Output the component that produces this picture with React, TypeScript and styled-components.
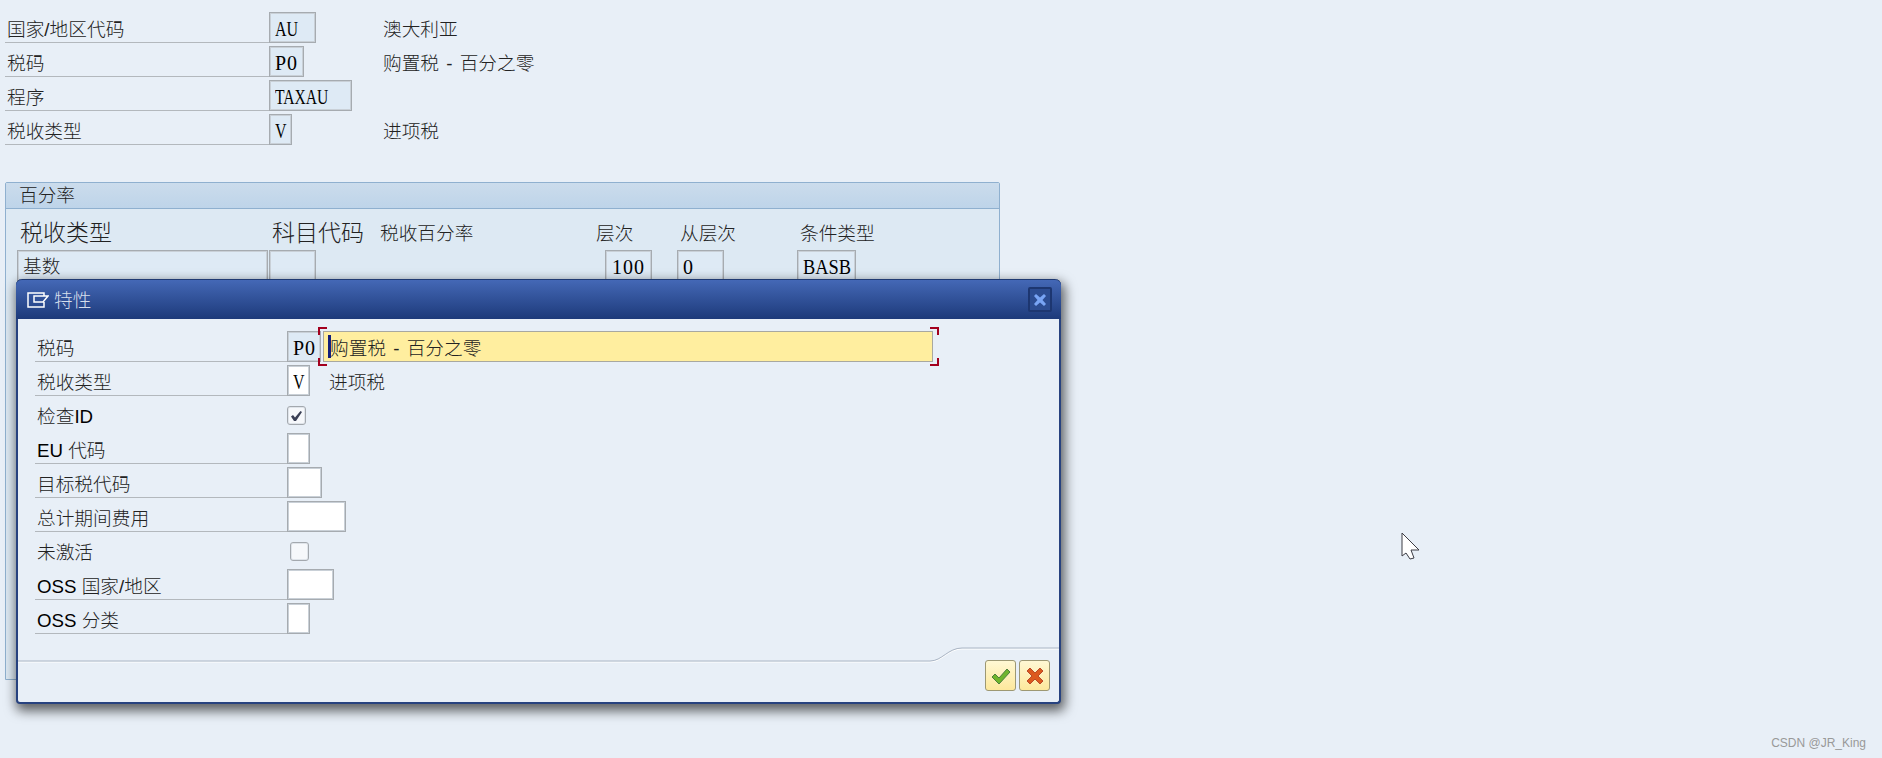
import React from 'react';
import styled, { createGlobalStyle } from 'styled-components';

const GlobalStyle = createGlobalStyle`
  html, body {
    margin: 0;
    padding: 0;
    background: #e8eff7;
    overflow: hidden;
  }
`;

const Page = styled.div`
  position: relative;
  box-sizing: border-box;
  width: 1882px;
  height: 758px;
  padding: 12px 0 0 5px;
  overflow: hidden;
  background: #e8eff7;
  color: #222;
  font-family: "Liberation Sans", "Noto Sans CJK SC", sans-serif;
  font-size: 18.7px;
  font-weight: 300;
`;

const Form = styled.div`
  display: flex;
  flex-direction: column;
  gap: 3px;
`;

const Row = styled.div<{ $label: number; $field: number }>`
  display: grid;
  grid-template-columns: ${({ $label }) => $label}px ${({ $field }) => $field}px 1fr;
  grid-template-rows: 31px;
  align-items: stretch;
`;

const Label = styled.div<{ $plain?: boolean }>`
  box-sizing: border-box;
  padding: 3px 0 0 2px;
  line-height: 29px;
  white-space: nowrap;
  border-bottom: 1px solid ${({ $plain }) => ($plain ? 'transparent' : '#b3b8bd')};
`;

const Latin = styled.span`
  color: #000;
  font-weight: 400;
`;

const Field = styled.div<{ $width: number; $tone?: 'blue' | 'white'; $right?: boolean; $cjk?: boolean }>`
  flex: none;
  box-sizing: border-box;
  width: ${({ $width }) => $width}px;
  height: 31px;
  padding: 0 ${({ $right }) => ($right ? '6px' : '4px')} 0 5px;
  border: 1px solid #a6abb0;
  box-shadow: inset 0 0 0 1px #c9d0d7;
  background: ${({ $tone }) => ($tone === 'white' ? '#fff' : '#deeaf5')};
  color: ${({ $cjk }) => ($cjk ? '#222' : '#000')};
  font-family: ${({ $cjk }) =>
    $cjk ? '"Liberation Sans", "Noto Sans CJK SC", sans-serif' : '"Liberation Serif", serif'};
  font-size: ${({ $cjk }) => ($cjk ? '18.7px' : '20px')};
  font-weight: ${({ $cjk }) => ($cjk ? 300 : 400)};
  line-height: ${({ $cjk }) => ($cjk ? '31px' : '33px')};
  text-align: ${({ $right }) => ($right ? 'right' : 'left')};
  white-space: nowrap;
  overflow: hidden;
`;

// the reference's field font is narrower than Liberation Serif
const FieldText = styled.span<{ $squeeze?: number; $spread?: boolean }>`
  display: inline-block;
  transform: scaleX(${({ $squeeze }) => $squeeze ?? 1});
  transform-origin: left center;
  letter-spacing: ${({ $spread }) => ($spread ? '1px' : '0')};
`;

const Description = styled.div`
  padding-top: 3px;
  line-height: 29px;
  white-space: nowrap;
  word-spacing: 2px;
`;

const Panel = styled.section`
  box-sizing: border-box;
  width: 995px;
  height: 498px;
  margin-top: 37px;
  border: 1px solid #8fb0cf;
  border-radius: 2px 2px 0 0;
  background: #dde9f3;
`;

const PanelHead = styled.div`
  box-sizing: border-box;
  height: 26px;
  padding-left: 13px;
  line-height: 26px;
  background: linear-gradient(#cbdcec, #bed4e9);
  border-bottom: 1px solid #8fb0cf;
`;

const ColumnRow = styled.div`
  display: grid;
  grid-template-columns: 252px 108px 216px 84px 120px 1fr;
  align-items: center;
  box-sizing: border-box;
  height: 41px;
  padding: 3px 0 0 14px;
  white-space: nowrap;
`;

const ColumnTitle = styled.div<{ $big?: boolean }>`
  font-size: ${({ $big }) => ($big ? '23px' : '18.7px')};
`;

const FieldRow = styled.div`
  display: grid;
  grid-template-columns: 252px 336px 72px 120px 1fr;
  padding-left: 11px;
`;

const Dialog = styled.div`
  position: absolute;
  left: 16px;
  top: 279px;
  box-sizing: border-box;
  display: flex;
  flex-direction: column;
  width: 1045px;
  height: 425px;
  border: 2px solid #27427f;
  border-top: 0;
  border-radius: 6px 6px 4px 4px;
  background: #e8eff7;
  box-shadow: 2px 5px 12px 2px rgba(0, 0, 0, 0.6);
`;

const TitleBar = styled.header`
  display: flex;
  align-items: center;
  gap: 5px;
  flex: none;
  box-sizing: border-box;
  height: 40px;
  margin: 0 -2px;
  padding: 0 9px 0 11px;
  border-top: 1px solid #1f3a72;
  border-radius: 6px 6px 0 0;
  background: linear-gradient(#4468b6, #1d3a7a);
  color: #d5deec;
`;

const TitleText = styled.div`
  flex: 1;
  padding-bottom: 2px;
`;

const CloseButton = styled.div`
  display: flex;
  align-items: center;
  justify-content: center;
  box-sizing: border-box;
  width: 24px;
  height: 25px;
  border: 2px solid #1d3670;
  border-radius: 2px;
  background: #2c4c92;
`;

const DialogBody = styled.div`
  flex: 1;
  padding: 12px 0 0 17px;
`;

const CheckBox = styled.div<{ $inset?: boolean }>`
  display: flex;
  align-items: center;
  justify-content: center;
  box-sizing: border-box;
  width: 19px;
  height: 19px;
  margin: 7px 0 0 ${({ $inset }) => ($inset ? '3px' : '0')};
  border: 1px solid #a3a8ae;
  border-radius: 3px;
  background: #f6f8fb;
  box-shadow: inset 0 0 0 1px #dfe4ea;
`;

const InputGroup = styled.div`
  display: flex;
  gap: 2px;
`;

const ActiveField = styled.div`
  position: relative;
  flex: none;
  box-sizing: border-box;
  width: 610px;
  height: 31px;
  padding: 2px 0 0 6px;
  border: 1px solid #a8a8a0;
  background: #ffee9f;
  line-height: 29px;
  white-space: nowrap;
  word-spacing: 2px;
`;

const Caret = styled.span`
  position: absolute;
  left: 4px;
  top: 3px;
  width: 3px;
  height: 23px;
  background: #14207a;
`;

// red corner marks round the focused field
const Corner = styled.span<{ $x: 'left' | 'right'; $y: 'top' | 'bottom' }>`
  position: absolute;
  ${({ $y }) => $y}: -5px;
  ${({ $x }) => $x}: ${({ $x }) => ($x === 'left' ? '-6px' : '-7px')};
  box-sizing: border-box;
  width: 9px;
  height: 8px;
  border-style: solid;
  border-color: #a3001e;
  border-width: 0;
  border-${({ $x }) => $x}-width: 2px;
  border-${({ $y }) => $y}-width: 2px;
`;

const Footer = styled.footer`
  position: relative;
  display: flex;
  justify-content: flex-end;
  align-items: flex-end;
  gap: 3px;
  flex: none;
  box-sizing: border-box;
  height: 55px;
  padding: 0 9px 11px 0;
`;

const FooterLine = styled.svg`
  position: absolute;
  left: 0;
  top: 0;
  width: 100%;
  height: 20px;
`;

const ActionButton = styled.div`
  display: flex;
  align-items: center;
  justify-content: center;
  box-sizing: border-box;
  width: 31px;
  height: 31px;
  border: 1px solid #9d9873;
  border-radius: 3px;
  background: linear-gradient(#fff8d4, #fde89c);
`;

const MouseCursor = styled.svg`
  position: absolute;
  left: 1401px;
  top: 532px;
`;

const Watermark = styled.div`
  position: absolute;
  right: 16px;
  top: 736px;
  color: #999;
  font-family: "Liberation Sans", sans-serif;
  font-size: 12px;
  font-weight: 400;
`;

const topRows = [
  { label: '国家/地区代码', value: 'AU', width: 47, text: '澳大利亚', squeeze: 0.8 },
  { label: '税码', value: 'P0', width: 35, text: '购置税 - 百分之零', spread: true },
  { label: '程序', value: 'TAXAU', width: 83, text: '', squeeze: 0.78 },
  { label: '税收类型', value: 'V', width: 23, text: '进项税', squeeze: 0.8 },
];

function App() {
  return (
    <Page>
      <GlobalStyle />
      <Form>
        {topRows.map(row => (
          <Row key={row.label} $label={264} $field={114}>
            <Label>{row.label}</Label>
            <Field $width={row.width}>
              <FieldText $squeeze={row.squeeze} $spread={row.spread}>{row.value}</FieldText>
            </Field>
            <Description>{row.text}</Description>
          </Row>
        ))}
      </Form>

      <Panel>
        <PanelHead>百分率</PanelHead>
        <ColumnRow>
          <ColumnTitle $big>税收类型</ColumnTitle>
          <ColumnTitle $big>科目代码</ColumnTitle>
          <ColumnTitle>税收百分率</ColumnTitle>
          <ColumnTitle>层次</ColumnTitle>
          <ColumnTitle>从层次</ColumnTitle>
          <ColumnTitle>条件类型</ColumnTitle>
        </ColumnRow>
        <FieldRow>
          <Field $width={251} $cjk>基数</Field>
          <Field $width={47} />
          <Field $width={47} $right><FieldText $spread>100</FieldText></Field>
          <Field $width={47}><FieldText $spread>0</FieldText></Field>
          <Field $width={59}><FieldText $squeeze={0.92}>BASB</FieldText></Field>
        </FieldRow>
      </Panel>

      <Dialog>
        <TitleBar>
          <svg width="22" height="16" viewBox="0 0 22 16" fill="none" stroke="#fff" strokeWidth="1.5">
            <path d="M17 4V1H1V15H17V10M7 4H21L16 10H7Z" />
          </svg>
          <TitleText>特性</TitleText>
          <CloseButton>
            <svg width="14" height="14" viewBox="0 0 14 14">
              <path d="M1 3l2-2 4 3.500 4-3.500 2 2-3.500 4 3.500 4-2 2-4-3.500-4 3.500-2-2 3.500-4z" fill="#79a4f5" />
            </svg>
          </CloseButton>
        </TitleBar>

        <DialogBody>
          <Form>
            <Row $label={252} $field={42}>
              <Label>税码</Label>
              <InputGroup>
                <Field $width={34}><FieldText $spread>P0</FieldText></Field>
                <ActiveField>
                  <Corner $x="left" $y="top" />
                  <Corner $x="left" $y="bottom" />
                  <Caret />
                  购置税 - 百分之零
                  <Corner $x="right" $y="top" />
                  <Corner $x="right" $y="bottom" />
                </ActiveField>
              </InputGroup>
            </Row>
            <Row $label={252} $field={42}>
              <Label>税收类型</Label>
              <Field $width={23} $tone="white"><FieldText $squeeze={0.8}>V</FieldText></Field>
              <Description>进项税</Description>
            </Row>
            <Row $label={252} $field={42}>
              <Label $plain>检查<Latin>ID</Latin></Label>
              <CheckBox>
                <svg width="13" height="12" viewBox="0 0 13 12">
                  <path d="M1 6.500l2-1.500 2 2.500L10.500 1l1.500 1-6 9H4z" fill="#3a3f55" />
                </svg>
              </CheckBox>
            </Row>
            <Row $label={252} $field={42}>
              <Label><Latin>EU</Latin> 代码</Label>
              <Field $width={23} $tone="white" />
            </Row>
            <Row $label={252} $field={42}>
              <Label>目标税代码</Label>
              <Field $width={35} $tone="white" />
            </Row>
            <Row $label={252} $field={60}>
              <Label>总计期间费用</Label>
              <Field $width={59} $tone="white" />
            </Row>
            <Row $label={252} $field={42}>
              <Label $plain>未激活</Label>
              <CheckBox $inset />
            </Row>
            <Row $label={252} $field={48}>
              <Label><Latin>OSS</Latin> 国家/地区</Label>
              <Field $width={47} $tone="white" />
            </Row>
            <Row $label={252} $field={42}>
              <Label><Latin>OSS</Latin> 分类</Label>
              <Field $width={23} $tone="white" />
            </Row>
          </Form>
        </DialogBody>

        <Footer>
          <FooterLine viewBox="0 0 1041 20" preserveAspectRatio="none" fill="none">
            <path d="M0 15H912C924 15 930 2 944 2H1041" stroke="#fff" strokeWidth="1" />
            <path d="M0 14H912C924 14 930 1 944 1H1041" stroke="#aab5c4" strokeWidth="1" />
          </FooterLine>
          <ActionButton>
            <svg width="20" height="18" viewBox="0 0 20 18">
              <path d="M1 10l3-3 4 4 8-9 3 3-11 12z" fill="#6fb52c" stroke="#4c7f3c" strokeWidth="1" />
            </svg>
          </ActionButton>
          <ActionButton>
            <svg width="18" height="18" viewBox="0 0 18 18">
              <path d="M1 4l3-3 5 5 5-5 3 3-5 5 5 5-3 3-5-5-5 5-3-3 5-5z" fill="#dc5a1e" stroke="#b94a2a" strokeWidth="1" />
            </svg>
          </ActionButton>
        </Footer>
      </Dialog>

      <MouseCursor width="20" height="28" viewBox="0 0 20 28">
        <path d="M1 1V24L5 21L9 27L13 26L10 18H18Z" fill="#fff" stroke="#3c3c44" strokeWidth="1" />
      </MouseCursor>

      <Watermark>CSDN @JR_King</Watermark>
    </Page>
  );
}

export default App;
